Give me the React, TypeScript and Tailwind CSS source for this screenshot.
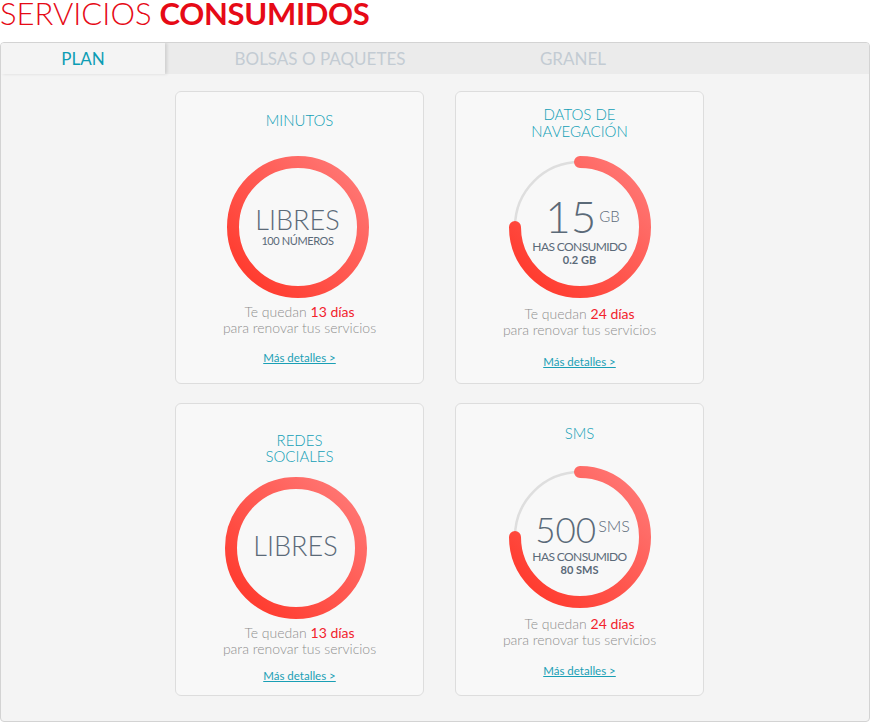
import React from "react";

type Card = {
  id: number;
  title: string[];
  titleBox: string;
  titleLeading: string;
  circleGap: string;
  kind: "free" | "usage";
  innerTop: string;
  subtitle?: string;
  total?: string;
  totalClass?: string;
  unit?: string;
  unitClass?: string;
  usedGap?: string;
  used?: string;
  days: number;
  textGap: string;
  linkGap: string;
};

const cards: Card[] = [
  {
    id: 1,
    title: ["MINUTOS"],
    titleBox: "pt-[20px]",
    titleLeading: "leading-[17px]",
    circleGap: "mt-[27px] ml-[-4px]",
    kind: "free",
    innerTop: "pt-[50px]",
    subtitle: "100 NÚMEROS",
    days: 13,
    textGap: "mt-[6px]",
    linkGap: "mt-[15px]",
  },
  {
    id: 2,
    title: ["DATOS DE", "NAVEGACIÓN"],
    titleBox: "pt-[14px]",
    titleLeading: "leading-[17px]",
    circleGap: "mt-[16px]",
    kind: "usage",
    innerTop: "pt-[38px]",
    total: "15",
    totalClass: "text-[44px] leading-[44px]",
    unit: "GB",
    unitClass: "text-[15px] mt-[15px] ml-[3px]",
    usedGap: "mt-[3px]",
    used: "0.2 GB",
    days: 24,
    textGap: "mt-[8px]",
    linkGap: "mt-[17px]",
  },
  {
    id: 3,
    title: ["REDES", "SOCIALES"],
    titleBox: "pt-[28px]",
    titleLeading: "leading-[16px]",
    circleGap: "mt-[13px] ml-[-8px]",
    kind: "free",
    innerTop: "pt-[55px]",
    days: 13,
    textGap: "mt-[6px]",
    linkGap: "mt-[12px]",
  },
  {
    id: 4,
    title: ["SMS"],
    titleBox: "pt-[21px]",
    titleLeading: "leading-[17px]",
    circleGap: "mt-[24px]",
    kind: "usage",
    innerTop: "pt-[45px]",
    total: "500",
    totalClass: "text-[35px] leading-[36px]",
    unit: "SMS",
    unitClass: "text-[16px] mt-[7px] ml-[2px]",
    usedGap: "mt-[4px]",
    used: "80 SMS",
    days: 24,
    textGap: "mt-[8px]",
    linkGap: "mt-[16px]",
  },
];

function Ring({ id, partial }: { id: number; partial: boolean }) {
  const gid = `ring-grad-${id}`;
  return (
    <svg width="142" height="142" viewBox="0 0 142 142" className="absolute inset-0">
      <defs>
        <linearGradient id={gid} x1="0" y1="1" x2="1" y2="0">
          <stop offset="0%" stopColor="#ff3426" />
          <stop offset="100%" stopColor="#ff7c7a" />
        </linearGradient>
      </defs>
      {partial ? (
        <>
          <circle cx="71" cy="71" r="65" fill="none" stroke="#dedede" strokeWidth="2.5" />
          <path
            d="M71 6 A65 65 0 1 1 6 71"
            fill="none"
            stroke={`url(#${gid})`}
            strokeWidth="12"
            strokeLinecap="round"
          />
        </>
      ) : (
        <circle cx="71" cy="71" r="65" fill="none" stroke={`url(#${gid})`} strokeWidth="12" />
      )}
    </svg>
  );
}

function ServiceCard({ card }: { card: Card }) {
  return (
    <div className="h-[293px] w-[249px] rounded-[6px] border border-[#dddddd] bg-[#f8f8f8] flex flex-col items-center">
      <div className={`${card.titleBox} text-center text-[15px] font-light ${card.titleLeading} text-[#119fb6]`}>
        {card.title.map((t) => (
          <div key={t}>{t}</div>
        ))}
      </div>

      <div className={`${card.circleGap} relative w-[142px] h-[142px]`}>
        <Ring id={card.id} partial={card.kind === "usage"} />
        <div className={`absolute inset-0 flex flex-col items-center ${card.innerTop} text-[#5b6a78]`}>
          {card.kind === "free" ? (
            <>
              <div className="text-[27px] font-light leading-[27px]">LIBRES</div>
              {card.subtitle && (
                <div className="text-[11px] leading-[11px] tracking-[-0.4px] mt-[2px]">{card.subtitle}</div>
              )}
            </>
          ) : (
            <>
              <div className="flex items-start ml-[6px]">
                <span className={`${card.totalClass} font-light`}>{card.total}</span>
                <span className={`${card.unitClass} font-light leading-none`}>{card.unit}</span>
              </div>
              <div className={`${card.usedGap} text-[12px] leading-[12px] tracking-[-0.6px]`}>HAS CONSUMIDO</div>
              <div className="mt-[1px] text-[11px] leading-[11px] font-bold">{card.used}</div>
            </>
          )}
        </div>
      </div>

      <div className={`${card.textGap} text-center text-[14px] font-light leading-[16px] text-[#8f8f8f]`}>
        <div>
          Te quedan <span className="text-[#f2232d] font-normal">{card.days} días</span>
        </div>
        <div>para renovar tus servicios</div>
      </div>

      <a className={`${card.linkGap} text-[11.5px] leading-[14px] text-[#1a9fb5] underline`}>Más detalles &gt;</a>
    </div>
  );
}

export default function App() {
  return (
    <div className="w-[870px] h-[722px] bg-white font-['Lato',sans-serif] overflow-hidden">
      <h1 className="h-[26px] text-[31px] leading-[26px] text-[#e60a16] whitespace-nowrap">
        <span className="font-light">SERVICIOS</span>{" "}
        <span className="font-bold tracking-[-0.3px]">CONSUMIDOS</span>
      </h1>

      <div className="mt-[16px] w-[870px] h-[680px] rounded-[4px] border border-[#d3d3d3] bg-[#f4f4f4] overflow-hidden">
        <div className="flex h-[31px] bg-[#ebebeb] text-[17px] leading-[31px]">
          <div className="relative z-10 w-[164px] bg-[#f4f4f4] text-center text-[#0c9db4] shadow-[2px_0_3px_rgba(0,0,0,0.12)]">
            PLAN
          </div>
          <div className="w-[310px] text-center text-[#c3cbd3]">BOLSAS O PAQUETES</div>
          <div className="w-[196px] text-center text-[#c3cbd3]">GRANEL</div>
        </div>

        <div className="pl-[174px] pt-[17px]">
          <div className="grid grid-cols-[249px_249px] gap-x-[31px] gap-y-[19px]">
            {cards.map((c) => (
              <ServiceCard key={c.id} card={c} />
            ))}
          </div>
        </div>
      </div>
    </div>
  );
}
